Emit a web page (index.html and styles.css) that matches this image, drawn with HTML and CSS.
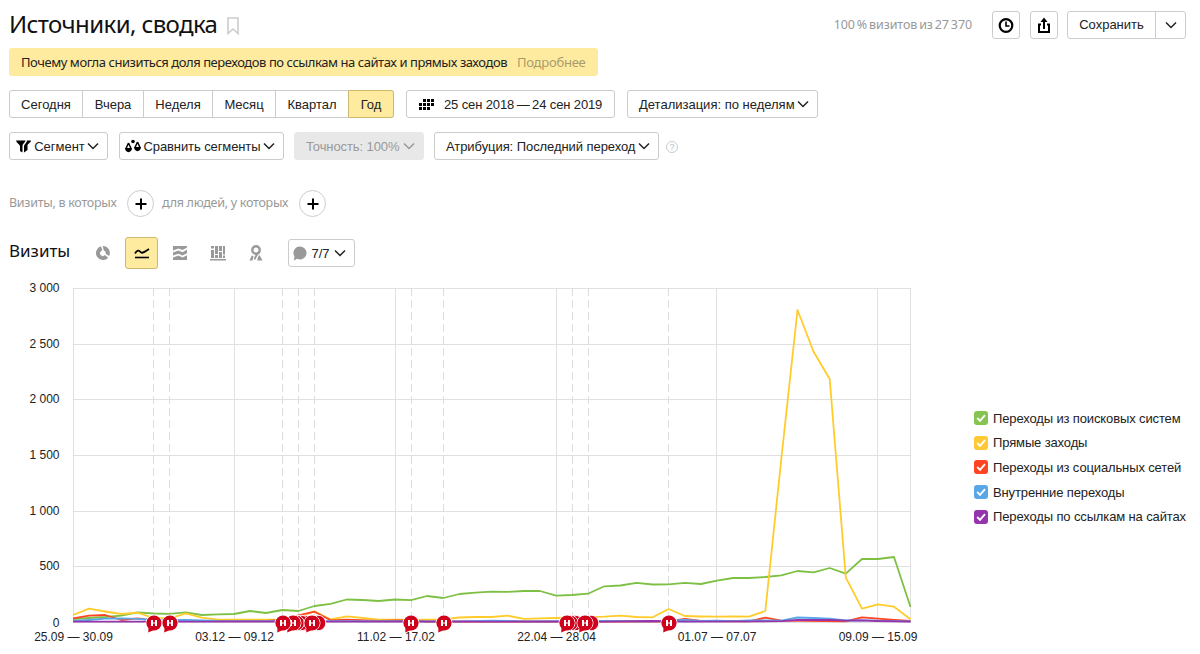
FILE: index.html
```html
<!DOCTYPE html>
<html lang="ru">
<head>
    <meta charset="UTF-8">
    <meta name="viewport" content="width=device-width, initial-scale=1.0">
    <title>Источники, сводка</title>
    <link rel="stylesheet" href="styles.css">
</head>
<body>

    <!-- Icons -->
    <svg class="sprite">
        <symbol id="arrow" viewBox="0 0 12 8"><path d="M1 1.5l5 5 5-5" fill="none" stroke="currentColor" stroke-width="1.5"/></symbol>
        <symbol id="check" viewBox="0 0 14 14"><path d="M3.2 7l2.8 2.9 5-5.7" fill="none" stroke="#fff" stroke-width="1.8"/></symbol>
        <symbol id="dot" viewBox="0 0 18 20">
            <circle cx="9" cy="9" r="8" fill="none" stroke="#fff" stroke-width="0.9"/>
            <path d="M3.6 12L3.2 18.4 10 15.5z" fill="#d0021b"/>
            <circle cx="9" cy="9" r="7.6" fill="#d0021b"/>
            <path d="M6 6h2v6H6zM10 6h2v6h-2zM8 8.4h2v1.2H8z" fill="#fff"/>
        </symbol>
    </svg>

    <!-- Header -->
    <div class="header">
        <h1>Источники, сводка</h1>
        <svg class="bookmark" width="12" height="18" viewBox="0 0 12 18"><path d="M1 1h10v15.5L6 12 1 16.5z" fill="none" stroke="#ccc" stroke-width="1.6"/></svg>
        <span class="visits">100 % визитов из 27 370</span>
        <button class="btn icon-btn">
            <svg width="16" height="16" viewBox="0 0 16 16"><circle cx="8" cy="8.5" r="6.3" fill="none" stroke="#000" stroke-width="2.2"/><path d="M8 4.5V9h3.5" fill="none" stroke="#000" stroke-width="1.6"/></svg>
        </button>
        <button class="btn icon-btn">
            <svg width="14" height="16" viewBox="0 0 14 16"><path d="M4 7.5H2V15h10V7.5h-2" fill="none" stroke="#000" stroke-width="2"/><path d="M7 12V4" stroke="#000" stroke-width="2"/><path d="M7 .5L10.5 5h-7z"/></svg>
        </button>
        <div class="group save">
            <button>Сохранить</button>
            <button><svg class="arrow"><use href="#arrow"/></svg></button>
        </div>
    </div>

    <div class="notice"><span>Почему могла снизиться доля переходов по ссылкам на сайтах и прямых заходов</span><a>Подробнее</a></div>

    <!-- Period -->
    <div class="row period">
        <div class="group">
            <button>Сегодня</button>
            <button>Вчера</button>
            <button>Неделя</button>
            <button>Месяц</button>
            <button>Квартал</button>
            <button class="active">Год</button>
        </div>
        <button class="btn dates">
            <svg width="16" height="11" viewBox="0 0 16 11"><path d="M4 0h3v3H4zM8 0h3v3H8zM12 0h3v3h-3zM0 4h3v3H0zM4 4h3v3H4zM8 4h3v3H8zM12 4h3v3h-3zM0 8h3v3H0zM4 8h3v3H4zM8 8h3v3H8z"/></svg>
            <span>25 сен 2018&#8201;—&#8201;24 сен 2019</span>
        </button>
        <button class="btn detail"><span>Детализация: по неделям</span><svg class="arrow"><use href="#arrow"/></svg></button>
    </div>

    <!-- Segments -->
    <div class="row segments">
        <button class="btn segment">
            <svg width="16" height="13" viewBox="0 0 16 13"><path d="M0 .5h9.500c0 2-3 3-3 5v7L4 11V6C3.500 4 .500 3 0 .500z"/><path d="M11 .5h4c0 2-3.500 3.500-3.500 5v4.500l-3.500 2.500V6C8.500 4 11 2.500 11 .500z"/></svg>
            <span>Сегмент</span><svg class="arrow"><use href="#arrow"/></svg>
        </button>
        <button class="btn compare">
            <svg width="16" height="14" viewBox="0 0 16 14"><path d="M3.500 4L1 9.500M3.500 4L6 9.500M12.500 3L10 8.500M12.500 3L15 8.500" stroke="#000" stroke-width="1.500"/><path d="M0 9h7c0 5.500-7 5.500-7 0zM9 8h7c0 5.500-7 5.500-7 0z"/><circle cx="8" cy="2.500" r="1.800"/></svg>
            <span>Сравнить сегменты</span><svg class="arrow"><use href="#arrow"/></svg>
        </button>
        <button class="btn accuracy"><span>Точность: 100%</span><svg class="arrow"><use href="#arrow"/></svg></button>
        <button class="btn attribution"><span>Атрибуция: Последний переход</span><svg class="arrow"><use href="#arrow"/></svg></button>
        <span class="help">?</span>
    </div>

    <!-- Conditions -->
    <div class="row conditions">
        <span class="cond-visits">Визиты, в которых</span>
        <button class="plus"><svg width="12" height="12" viewBox="0 0 12 12"><path d="M6 .5v11M.5 6h11" stroke="#000" stroke-width="2"/></svg></button>
        <span class="cond-people">для людей, у которых</span>
        <button class="plus"><svg width="12" height="12" viewBox="0 0 12 12"><path d="M6 .5v11M.5 6h11" stroke="#000" stroke-width="2"/></svg></button>
    </div>

    <!-- Chart toolbar -->
    <div class="row toolbar">
        <h2>Визиты</h2>
        <button class="view">
            <svg width="14" height="14" viewBox="0 0 14 14"><path d="M5 .3A7 7 0 1 0 12.200 11.700L8.800 9.100A2.700 2.700 0 0 1 4.700 5.500L6.300 4.300z"/><path d="M6.700 0A7 7 0 0 1 13.200 10L9.600 7.700A2.700 2.700 0 0 0 7.800 4.400z"/></svg>
        </button>
        <button class="view active">
            <svg width="16" height="12" viewBox="0 0 16 12"><path d="M1 6.500c2-3.500 4-3.500 5.500-1.500S10 5 15 2" fill="none" stroke="#000" stroke-width="1.800"/><path d="M1 10.500h14" stroke="#000" stroke-width="1.600"/></svg>
        </button>
        <button class="view">
            <svg width="14" height="14" viewBox="0 0 14 14"><path d="M0 0h14v1.500L9.500 4l-4-1.500L0 4.500zM0 6.500l5.500-2 4 1.700L14 3.700v3.500L9.500 9.500l-4-1.700L0 9.500zM0 11.500l5.500-1.900 4 1.900L14 9.200V14H0z"/></svg>
        </button>
        <button class="view">
            <svg width="16" height="15" viewBox="0 0 16 15"><path d="M0 13h16v1.600H0zM1 4h3v8H1zM1 0h3v2.500H1zM5 0h3v8H5zM5 9h3v3H5zM9 0h3v5H9zM9 6h3v6H9zM13 0h2v8.500h-2zM13 9.500h2V12h-2z"/></svg>
        </button>
        <button class="view">
            <svg width="14" height="16" viewBox="0 0 14 16"><circle cx="7" cy="5" r="3.700" fill="none" stroke="#999" stroke-width="2.400"/><path d="M11.500 6.500C10.500 9 8 10 6.500 14.500H4.800C5 11.500 7 10 8 7.500z"/><path d="M2.800 10.500l1.700.7-1 4.300H.5zM10.500 10l3 5.500H8.300L9 12z"/></svg>
        </button>
        <button class="btn notes">
            <svg width="14" height="15" viewBox="0 0 14 15"><path d="M7 .5a6.500 6.500 0 0 1 0 13c-1 0-2-.3-3-.7L.800 14.600 1.500 10.500A6.500 6.500 0 0 1 7 .5z" fill="#999"/></svg>
            <span>7/7</span><svg class="arrow"><use href="#arrow"/></svg>
        </button>
    </div>

    <!-- Chart -->
    <div class="chart">
        <svg class="plot" width="930" height="374" viewBox="0 280 930 374">
            <path class="grid" d="M73 288.500H911M73 344.500H911M73 399.500H911M73 455.500H911M73 511.500H911M73 566.500H911M73 622.500H911M73.500 288V623M234.500 288V623M395.500 288V623M556.500 288V623M716.500 288V623M877.500 288V623M910.500 288V623"/>
            <path class="notes-grid" d="M153.500 288V623M169.500 288V623M282.500 288V623M298.500 288V623M314.500 288V623M411.500 288V623M443.500 288V623M572.500 288V623M588.500 288V623M668.500 288V623"/>

            <polyline class="line search" points="73,619 89,618 105,617 121.300,615.600 137.400,612.300 153.500,613.500 169.600,613.800 185.700,612.300 201.800,615 217.900,614.400 234,614 250,611 266,613 282.300,610 298.400,611 314.500,606 330.600,603.800 346.700,599.500 362.800,600 378.900,601 395,599.500 411,600.200 427,596 443.300,598 459.400,594 475.500,592.700 491.600,591.700 507.700,591.800 523.800,591 540,591 556,595.700 572,595 588,593.700 604.300,586.300 620.400,585.500 636.500,582.800 652.600,584.500 668.700,584.300 684.800,582.800 700.900,584 717,580.700 733,578 749,578 765.300,577 781.400,575.300 797.500,571 813.600,572.300 829.700,568 845.800,573.600 862,559 878,559 894,557 910.500,607"/>
            <polyline class="line direct" points="73,615 89,608.700 105,611.500 121.300,614 137.400,612.700 153.500,618 169.600,618.500 185.700,613.300 201.800,617.700 217.900,619.700 234,619.700 250,619.700 266,619.700 282.300,620 298.400,617 314.500,611.300 330.600,619.500 346.700,616.300 362.800,618 378.900,619.700 395,619.700 411,620 427,619.700 443.300,619.300 459.400,617.500 475.500,617 491.600,617 507.700,615.700 523.800,618.800 540,618.300 556,618 572,617.500 588,617 604.300,616.700 620.400,615.600 636.500,617 652.600,617.300 668.700,609 684.800,616 700.900,616.500 717,616.700 733,616.500 749,616.700 765.300,611 781.400,458 797.500,310 813.600,351.700 829.700,379 845.800,577.700 862,608.700 878,604.300 894,606.700 910.500,619.300"/>
            <polyline class="line social" points="73,618.300 89,615.700 105,615 121.300,620 137.400,618.300 153.500,620.300 185.700,621 266,621 282.300,620 298.400,615.300 314.500,611.700 330.600,620.300 346.700,619.700 378.900,621 395,620.300 411,620.500 427,621.500 668.700,621.500 684.800,619 700.900,621 749,621.300 765.300,617.700 781.400,620.700 845.800,621.300 862,617.300 878,618.700 894,620 910.500,621"/>
            <polyline class="line internal" points="73,621 89,620 105,618.700 121.300,618.300 137.400,618.800 153.500,620 169.600,619.800 185.700,620 217.900,621 346.700,621.200 459.400,621.300 491.600,620.600 523.800,621.300 604.300,621 652.600,621.300 684.800,619.800 700.900,621 717,620.700 733,621.200 749,620.300 781.400,620.700 797.500,617.500 813.600,618 829.700,618.700 845.800,620.500 862,620.300 910.500,621.300"/>
            <polyline class="line links" points="73,621.700 604.300,621.700 652.600,621 684.800,621.700 781.400,621.200 797.500,620 829.700,619.800 845.800,620.700 862,620.300 878,621 910.500,621.700"/>

            <g class="y-axis">
                <text x="59.500" y="292">3 000</text>
                <text x="59.500" y="348">2 500</text>
                <text x="59.500" y="403">2 000</text>
                <text x="59.500" y="459">1 500</text>
                <text x="59.500" y="515">1 000</text>
                <text x="59.500" y="570">500</text>
                <text x="59.500" y="627">0</text>
            </g>
            <g class="x-axis">
                <text x="73.500" y="641">25.09 — 30.09</text>
                <text x="234.500" y="641">03.12 — 09.12</text>
                <text x="396" y="641">11.02 — 17.02</text>
                <text x="556.500" y="641">22.04 — 28.04</text>
                <text x="717" y="641">01.07 — 07.07</text>
                <text x="878" y="641">09.09 — 15.09</text>
            </g>

            <g class="marks">
                <use href="#dot" x="145" y="614" width="18" height="20"/>
                <use href="#dot" x="161" y="614" width="18" height="20"/>
                <circle cx="318" cy="623" r="7.8"/>
                <circle cx="305" cy="623" r="7.8"/>
                <circle cx="301" cy="623" r="7.8"/>
                <circle cx="296.5" cy="623" r="7.8"/>
                <use href="#dot" x="303" y="614" width="18" height="20"/>
                <use href="#dot" x="284" y="614" width="18" height="20"/>
                <use href="#dot" x="274" y="614" width="18" height="20"/>
                <use href="#dot" x="402" y="614" width="18" height="20"/>
                <use href="#dot" x="435" y="614" width="18" height="20"/>
                <circle cx="591" cy="623" r="7.8"/>
                <circle cx="575" cy="623" r="7.8"/>
                <circle cx="570.5" cy="623" r="7.8"/>
                <use href="#dot" x="576" y="614" width="18" height="20"/>
                <use href="#dot" x="558" y="614" width="18" height="20"/>
                <use href="#dot" x="660" y="614" width="18" height="20"/>
            </g>
        </svg>

        <ul class="legend">
            <li><svg class="box search"><use href="#check"/></svg>Переходы из поисковых систем</li>
            <li><svg class="box direct"><use href="#check"/></svg>Прямые заходы</li>
            <li><svg class="box social"><use href="#check"/></svg>Переходы из социальных сетей</li>
            <li><svg class="box internal"><use href="#check"/></svg>Внутренние переходы</li>
            <li><svg class="box links"><use href="#check"/></svg>Переходы по ссылкам на сайтах</li>
        </ul>
    </div>

</body>
</html>
```
FILE: styles.css
```css
/* General Styles */
* {
    box-sizing: border-box;
}

body {
    margin: 0;
    padding: 10px 14px 0 9px;
    height: 654px;
    overflow: hidden;
    background: #fff;
    color: #222;
    font: 13px "Liberation Sans", Arial, sans-serif;
}

.sprite {
    display: none;
}

h1, h2 {
    margin: 0;
    font-family: "Noto Sans", sans-serif;
    font-weight: 400;
    color: #111;
    white-space: nowrap;
}

button {
    margin: 0;
    padding: 0;
    border: 0;
    background: none;
    color: inherit;
    font: inherit;
    white-space: nowrap;
}

.btn, .group {
    display: flex;
    align-items: center;
    height: 28px;
    border: 1px solid #ccc;
    border-radius: 3px;
    background: #fff;
}

.arrow {
    width: 12px;
    height: 8px;
    flex: none;
}

.row {
    display: flex;
    align-items: center;
}

/* Header */
.header {
    display: flex;
    align-items: center;
    height: 29px;
}

h1 {
    font-size: 24px;
    line-height: 28px;
    letter-spacing: -0.6px;
    width: 209px;
    margin-top: -2px;
}

.bookmark {
    margin: 3px 0 0 9px;
}

.visits {
    margin-left: auto;
    margin-right: 20px;
    font: 12.5px "Noto Sans", sans-serif;
    letter-spacing: -0.1px;
    word-spacing: -1.2px;
    color: #999;
}

.icon-btn {
    width: 28px;
    justify-content: center;
    margin-right: 10px;
}

.header .icon-btn:nth-of-type(2) {
    margin-right: 9px;
}

.save {
    width: 119px;
}

.save button:first-child {
    width: 88px;
}

.save button:last-child {
    flex: 1;
}

.group button {
    height: 100%;
    border-right: 1px solid #ccc;
}

.group button:last-child {
    border-right: 0;
}

/* Notice */
.notice {
    display: flex;
    align-items: center;
    width: 589px;
    height: 28px;
    margin-top: 9px;
    padding-left: 12px;
    border-radius: 3px;
    background: #ffeba0;
    font: 13px "Noto Sans", sans-serif;
    letter-spacing: -0.44px;
    white-space: nowrap;
}

.notice span {
    width: 496px;
}

.notice a {
    color: #a99b6b;
    letter-spacing: -0.25px;
}

/* Period */
.period {
    margin-top: 14px;
}

.period .group button:nth-child(1) { width: 73px; }
.period .group button:nth-child(2) { width: 61px; }
.period .group button:nth-child(3) { width: 69px; }
.period .group button:nth-child(4) { width: 63px; }
.period .group button:nth-child(5) { width: 73px; }

.period .group .active {
    width: 46px;
    height: 28px;
    margin: -1px;
    border: 1px solid #ccba72;
    border-radius: 0 3px 3px 0;
    background: #ffeba0;
}

.dates {
    width: 209px;
    margin-left: 12px;
    padding-left: 12px;
    letter-spacing: -0.12px;
}

.dates span {
    margin-left: 9px;
}

.detail {
    width: 191px;
    margin-left: 12px;
    padding: 0 8px 0 11px;
    justify-content: space-between;
}

/* Segments */
.segments {
    margin-top: 14px;
}

.segments .btn {
    justify-content: space-between;
    padding: 0 8px 0 11px;
}

.segments .segment {
    width: 99px;
    padding-left: 6px;
}

.segments .compare {
    width: 165px;
    margin-left: 11px;
    padding-left: 5px;
    letter-spacing: -0.1px;
}

.segments .accuracy {
    width: 130px;
    margin-left: 10px;
    border-color: #e8e8e8;
    background: #e8e8e8;
    color: #999;
    letter-spacing: -0.1px;
}

.segments .attribution {
    width: 225px;
    margin-left: 10px;
    letter-spacing: -0.07px;
}

.help {
    width: 12px;
    height: 12px;
    margin-left: 7px;
    margin-top: 2px;
    border: 1px solid #ccc;
    border-radius: 50%;
    color: #bbb;
    font-size: 9px;
    line-height: 10px;
    text-align: center;
}

/* Conditions */
.conditions {
    margin-top: 30px;
    font: 12.5px "Noto Sans", sans-serif;
    letter-spacing: -0.27px;
    color: #999;
    white-space: nowrap;
}

.conditions span {
    margin-top: -3px;
}

.cond-visits {
    width: 118px;
}

.cond-people {
    width: 129px;
    margin-left: 8px;
    margin-right: 8px;
}

.plus {
    display: flex;
    align-items: center;
    justify-content: center;
    width: 27px;
    height: 27px;
    border: 1px solid #ccc;
    border-radius: 50%;
}

/* Chart toolbar */
.toolbar {
    margin-top: 20px;
    height: 32px;
}

h2 {
    width: 77px;
    margin-top: -4px;
    font-size: 17px;
    line-height: 30px;
}

.view {
    display: flex;
    align-items: center;
    justify-content: center;
    width: 33px;
    height: 32px;
    margin-right: 5px;
    fill: #999;
}

.view.active {
    margin-left: 1px;
    border: 1px solid #ccba72;
    border-radius: 3px;
    background: #ffeba0;
}

.notes {
    width: 67px;
    margin-left: 11px;
    padding: 0 8px 0 4px;
    justify-content: space-between;
}

/* Chart */
.chart {
    display: flex;
    margin: 11px 0 0 -9px;
}

.plot {
    flex: none;
}

.grid {
    stroke: #e0e0e0;
    fill: none;
}

.notes-grid {
    stroke: #ddd;
    stroke-dasharray: 8 4;
    fill: none;
}

.line {
    fill: none;
    stroke-width: 1.8;
    stroke-linejoin: round;
}

.line.search { stroke: #7dc043; }
.line.direct { stroke: #ffcc2b; }
.line.social { stroke: #ff4423; }
.line.internal { stroke: #5aa7e8; }
.line.links { stroke: #9435ae; }

.y-axis, .x-axis {
    font-size: 12px;
    fill: #222;
}

.y-axis {
    text-anchor: end;
}

.x-axis {
    text-anchor: middle;
}

.marks circle {
    fill: #d0021b;
    stroke: #fff;
    stroke-width: 0.9;
}

.legend {
    list-style: none;
    margin: 126px 0 0 44px;
    padding: 0;
    letter-spacing: -0.13px;
    white-space: nowrap;
}

.legend li {
    display: flex;
    align-items: center;
    height: 24.6px;
}

.box {
    width: 14px;
    height: 14px;
    margin-right: 5px;
    border-radius: 3px;
}

.box.search { background: #85c450; }
.box.direct { background: #ffc933; }
.box.social { background: #ff4423; }
.box.internal { background: #5aa7e8; }
.box.links { background: #9435ae; }
```
